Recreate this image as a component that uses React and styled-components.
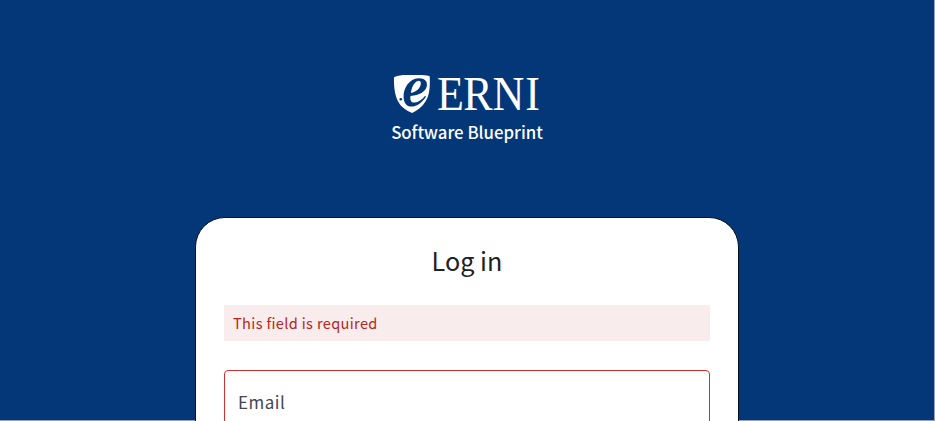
import React from 'react';
import styled, { createGlobalStyle } from 'styled-components';

const GlobalStyle = createGlobalStyle`
  * { box-sizing: border-box; }
  body {
    margin: 0;
    overflow: hidden;
    background: #fff;
    font-family: "Noto Sans CJK JP", "Noto Sans", sans-serif;
  }
`;

const Page = styled.main`
  width: 935px;
  height: 421px;
  overflow: hidden;
  background: linear-gradient(#043777, #043777) 0 0 / 934px 420px no-repeat #8ba4c3;
  padding-right: 1px;
  display: flex;
  flex-direction: column;
  align-items: center;
`;

const Brand = styled.header`
  height: 217px;
  flex: none;
  padding-top: 74px;
  display: flex;
  flex-direction: column;
  align-items: center;
`;

const Logo = styled.svg`
  display: block;
  width: 148px;
  height: 40px;
  overflow: visible;
`;

const Tagline = styled.div`
  margin-top: 6px;
  color: #fff;
  font-size: 16.8px;
  font-weight: 500;
  line-height: 24px;
  white-space: nowrap;
`;

const Card = styled.section`
  width: 544px;
  height: 300px;
  flex: none;
  padding: 25px 28px 0;
  background: #fff;
  border: 1px solid #07101d;
  border-radius: 30px;
`;

const Title = styled.h1`
  margin: 0;
  height: 62px;
  color: #212121;
  font-size: 25.2px;
  font-weight: 400;
  line-height: 34px;
  text-align: center;
`;

const Alert = styled.div`
  height: 36px;
  padding-left: 9px;
  background: #f9ecec;
  color: #b72622;
  font-size: 14.6px;
  line-height: 36px;
  letter-spacing: 0.34px;
`;

const Field = styled.label`
  display: block;
  height: 70px;
  margin-top: 29px;
  padding: 14px 13px;
  border: 1px solid #d3302f;
  border-radius: 4px;
  color: #46464f;
  font-size: 17px;
  line-height: 34px;
  letter-spacing: 0.5px;
`;

export default function App() {
  return (
    <>
      <GlobalStyle />
      <Page>
        <Brand>
          <Logo viewBox="0 0 148 40" role="img" aria-label="ERNI">
            <path
              d="M1 3.2C7 .4 12 1 19 1s13-.4 17.7 1.2c.5 10.5-.2 17.8-3.1 23.3C30.8 31 26.8 35 19.2 39 11.5 35.5 7.2 32 4.5 26.2 1.8 20.5.7 12.5 1 3.2Z"
              fill="#fff"
            />
            <path
              fillRule="evenodd"
              d="M10.6 23C10.3 14 16.5 4.6 25.5 4.3c6-.2 9.3 3 8.3 7.9-1.2 5.5-7.5 9.1-16.3 9.7-.7 4.3.9 7 4.2 6.7 3.7-.3 7.2-2.7 10.5-6.8l.8.7c-3.6 6-9 10.1-14.5 10.1-4.9 0-7.7-3.6-7.9-9.6ZM18 19c5.1-1 9.3-4.5 9.8-9.2.3-2.7-1.5-3.9-3.9-2.5C20.5 9.4 18.5 14 18 19Z"
              fill="#043777"
            />
            <circle cx="7.8" cy="25.2" r="1.3" fill="#043777" />
            <text
              x="48.9 78 110.5 146.9"
              y="35.8"
              transform="scale(.9 1)"
              fill="#fff"
              fontFamily="Liberation Serif, serif"
              fontSize="49"
            >
              ERNI
            </text>
          </Logo>
          <Tagline>Software Blueprint</Tagline>
        </Brand>
        <Card>
          <Title>Log in</Title>
          <Alert>This field is required</Alert>
          <Field>Email</Field>
        </Card>
      </Page>
    </>
  );
}
